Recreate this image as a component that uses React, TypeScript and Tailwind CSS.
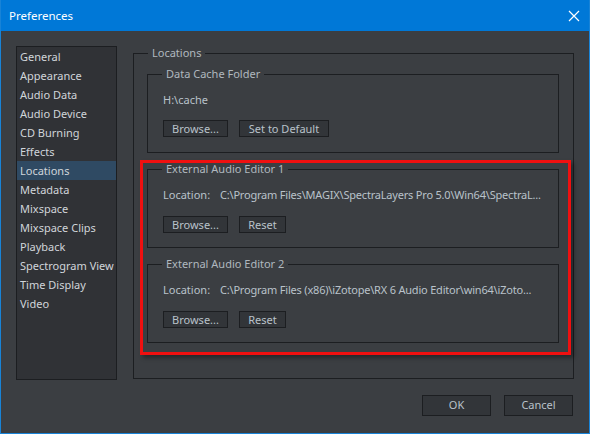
import React from 'react';

const items = [
  'General',
  'Appearance',
  'Audio Data',
  'Audio Device',
  'CD Burning',
  'Effects',
  'Locations',
  'Metadata',
  'Mixspace',
  'Mixspace Clips',
  'Playback',
  'Spectrogram View',
  'Time Display',
  'Video',
];

function Btn({ label, w }: { label: string; w: string }) {
  return (
    <button
      className={`${w} h-[17px] border border-[#1c1e21] bg-[#323539] text-[#b9c2ca] leading-[15px] text-center`}
    >
      {label}
    </button>
  );
}

// fieldset padding shifts the legend, so padding goes on the inner div
function Group({ title, className, children }: { title: string; className?: string; children: React.ReactNode }) {
  return (
    <fieldset className={`min-w-0 border border-[#1c1e21] ${className ?? ''}`}>
      <legend className="ml-[14px] px-[4px] leading-[16px] text-[#b0b8bf]">{title}</legend>
      {children}
    </fieldset>
  );
}

function Editor({ n, path, className }: { n: number; path: string; className?: string }) {
  return (
    <Group title={`External Audio Editor ${n}`} className={className}>
      <div className="px-[15px] pb-[14px]">
        <div className="mt-[9px] h-[17px] leading-[17px] text-[#b9c2ca] flex whitespace-nowrap">
          <span className="w-[57px] shrink-0">Location:</span>
          <span className="tracking-[-0.2px]">{path}</span>
        </div>
        <div className="mt-[13px] flex gap-[11px]">
          <Btn label="Browse..." w="w-[65px]" />
          <Btn label="Reset" w="w-[47px]" />
        </div>
      </div>
    </Group>
  );
}

export default function App() {
  return (
    <div
      className="w-[590px] h-[434px] flex flex-col bg-[#3b3e42] border-x border-b border-[#1883d7] text-[11px] overflow-hidden"
      style={{ fontFamily: '"Noto Sans", "Segoe UI", sans-serif' }}
    >
      <div className="h-[31px] shrink-0 bg-[#0078d7] -mx-px flex items-center justify-between pl-[9px] pr-[8px] text-white text-[11.5px]">
        <span>Preferences</span>
        <svg width="12" height="12" viewBox="0 0 12 12" className="mr-[2px]">
          <path d="M1 1L11 11M11 1L1 11" stroke="white" strokeWidth="1.2" />
        </svg>
      </div>

      <div className="flex flex-1 pl-[15px] pt-[15px]">
        <ul className="w-[101px] h-[334px] shrink-0 bg-[#303236] border border-[#1c1e21] text-[#d0d5da]">
          {items.map((it) => (
            <li
              key={it}
              className={`h-[19px] leading-[19px] pl-[3px] whitespace-nowrap ${it === 'Locations' ? 'bg-[#2f4a63]' : ''}`}
            >
              {it}
            </li>
          ))}
        </ul>

        <Group title="Locations" className="ml-[16px] -mt-[1px] w-[441px] h-[334px]">
          <div className="pl-[13px] pr-[14px] pt-[5px]">
            <Group title="Data Cache Folder">
              <div className="px-[15px] pb-[15px]">
                <div className="mt-[9px] h-[17px] leading-[17px] text-[#b9c2ca]">H:\cache</div>
                <div className="mt-[12px] flex gap-[11px]">
                  <Btn label="Browse..." w="w-[65px]" />
                  <Btn label="Set to Default" w="w-[90px]" />
                </div>
              </div>
            </Group>

            <div className="mt-[7px] -ml-[7px] w-[431px] border-[3px] border-[#f01010] shadow-[3px_3px_4px_rgba(0,0,0,0.35)] pl-[4px] pr-[9px] pb-[9px]">
              <Editor
                n={1}
                className="-mt-[2px]"
                path="C:\Program Files\MAGIX\SpectraLayers Pro 5.0\Win64\SpectraL..."
              />
              <Editor
                n={2}
                className="mt-[8px]"
                path="C:\Program Files (x86)\iZotope\RX 6 Audio Editor\win64\iZoto..."
              />
            </div>
          </div>
        </Group>
      </div>

      <div className="h-[38px] shrink-0 flex justify-end gap-[13px] pr-[16px]">
        <button className="w-[69px] h-[21px] border border-[#1c1e21] bg-[#323539] text-[#b9c2ca]">OK</button>
        <button className="w-[69px] h-[21px] border border-[#1c1e21] bg-[#323539] text-[#b9c2ca]">Cancel</button>
      </div>
    </div>
  );
}
